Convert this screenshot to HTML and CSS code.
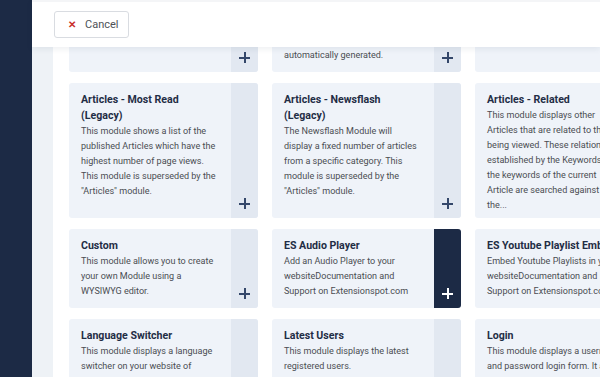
FILE: index.html
```html
<!DOCTYPE html>
<html lang="en">
<head>
    <meta charset="UTF-8">
    <meta name="viewport" content="width=device-width, initial-scale=1.0">
    <title>Modules: Select a Module Type</title>
    <link rel="stylesheet" href="styles.css">
</head>
<body>
    <div class="sidebar"></div>

    <div class="main">
        <!-- Pasek narzedzi -->
        <div class="toolbar">
            <button class="btn-cancel" type="button">
                <span class="btn-cancel-icon">&#x2715;</span>
                Cancel
            </button>
        </div>

        <div class="content">
            <div class="panel">
                <div class="modules">
                    <!-- Rzad 1 (przewiniety) -->
                    <div class="module">
                        <div class="module-body">
                            <h3 class="module-title">Articles - Categories</h3>
                            <p class="module-desc">This module displays a list of categories from one parent category.</p>
                        </div>
                        <div class="module-add"><span class="plus"></span></div>
                    </div>
                    <div class="module">
                        <div class="module-body">
                            <h3 class="module-title">Articles - Archived</h3>
                            <p class="module-desc">This module shows a list of the calendar months containing archived articles. After you have changed the status of an article to archived, this list will be automatically generated.</p>
                        </div>
                        <div class="module-add"><span class="plus"></span></div>
                    </div>
                    <div class="module">
                        <div class="module-body">
                            <h3 class="module-title">Articles - Latest</h3>
                            <p class="module-desc">This module shows a list of the most recently published and current Articles.</p>
                        </div>
                        <div class="module-add"><span class="plus"></span></div>
                    </div>

                    <!-- Rzad 2 -->
                    <div class="module">
                        <div class="module-body">
                            <h3 class="module-title">Articles - Most Read (Legacy)</h3>
                            <p class="module-desc">This module shows a list of the published Articles which have the highest number of page views. This module is superseded by the "Articles" module.</p>
                        </div>
                        <div class="module-add"><span class="plus"></span></div>
                    </div>
                    <div class="module">
                        <div class="module-body">
                            <h3 class="module-title">Articles - Newsflash (Legacy)</h3>
                            <p class="module-desc">The Newsflash Module will display a fixed number of articles from a specific category. This module is superseded by the "Articles" module.</p>
                        </div>
                        <div class="module-add"><span class="plus"></span></div>
                    </div>
                    <div class="module">
                        <div class="module-body">
                            <h3 class="module-title">Articles - Related</h3>
                            <p class="module-desc">This module displays other Articles that are related to the one being viewed. These relations are established by the Keywords. All the keywords of the current Article&nbsp;are searched against all the...</p>
                        </div>
                        <div class="module-add"><span class="plus"></span></div>
                    </div>

                    <!-- Rzad 3 -->
                    <div class="module">
                        <div class="module-body">
                            <h3 class="module-title">Custom</h3>
                            <p class="module-desc">This module allows you to create your own Module using a WYSIWYG editor.</p>
                        </div>
                        <div class="module-add"><span class="plus"></span></div>
                    </div>
                    <div class="module">
                        <div class="module-body">
                            <h3 class="module-title">ES Audio Player</h3>
                            <p class="module-desc">Add an Audio Player to your websiteDocumentation and Support on Extensionspot.com</p>
                        </div>
                        <div class="module-add active"><span class="plus"></span></div>
                    </div>
                    <div class="module">
                        <div class="module-body">
                            <h3 class="module-title nowrap">ES Youtube Playlist Embed</h3>
                            <p class="module-desc">Embed Youtube Playlists in your websiteDocumentation and Support on Extensionspot.com</p>
                        </div>
                        <div class="module-add"><span class="plus"></span></div>
                    </div>

                    <!-- Rzad 4 -->
                    <div class="module">
                        <div class="module-body">
                            <h3 class="module-title">Language Switcher</h3>
                            <p class="module-desc">This module displays a language switcher on your website of available content languages.</p>
                        </div>
                        <div class="module-add"><span class="plus"></span></div>
                    </div>
                    <div class="module">
                        <div class="module-body">
                            <h3 class="module-title">Latest Users</h3>
                            <p class="module-desc">This module displays the latest registered users.</p>
                        </div>
                        <div class="module-add"><span class="plus"></span></div>
                    </div>
                    <div class="module">
                        <div class="module-body">
                            <h3 class="module-title">Login</h3>
                            <p class="module-desc">This module displays a username and password login form. It also displays a link.</p>
                        </div>
                        <div class="module-add"><span class="plus"></span></div>
                    </div>
                </div>
            </div>
        </div>
    </div>
</body>
</html>
```

FILE: styles.css
```css
body {
    margin: 0;
    height: 100vh;
    display: flex;
    overflow: hidden;
    font-family: Roboto, "Liberation Sans", sans-serif;
    background-color: #eef2f6;
}
.sidebar {
    width: 32px;
    flex-shrink: 0;
    background-color: #1c2a45;
}
.main {
    flex: 1;
    min-width: 0;
    display: flex;
    flex-direction: column;
}
/* Pasek z przyciskiem Cancel - lezy nad przewinieta lista */
.toolbar {
    position: relative;
    z-index: 1;
    height: 47px;
    flex-shrink: 0;
    display: flex;
    align-items: center;
    padding-left: 22px;
    background-color: #fff;
    border-top: 2px solid #f4f5f7;
    box-sizing: border-box;
    box-shadow: 0 2px 6px rgba(30, 50, 80, 0.08);
}
.btn-cancel {
    height: 27px;
    width: 75px;
    display: flex;
    align-items: center;
    padding: 0 0 0 13px;
    gap: 9px;
    background-color: #fff;
    border: 1px solid #d9dce1;
    border-radius: 3px;
    color: #4e5257;
    font-family: inherit;
    font-size: 11px;
}
.btn-cancel-icon {
    color: #c9302c;
    font-size: 10px;
    font-weight: bold;
}
.content {
    flex: 1;
    padding-left: 21px;
    overflow: hidden;
}
.panel {
    display: flow-root;
    height: 100%;
    background-color: #fff;
    padding: 0 16px;
}
.modules {
    display: grid;
    grid-template-columns: repeat(3, 189px);
    grid-template-rows: 124px 135px 79px 135px;
    column-gap: 14px;
    row-gap: 11px;
    margin-top: -99px;
}
.module {
    display: flex;
    background-color: #eff3f9;
    border-radius: 3px;
    overflow: hidden;
}
.module-body {
    flex: 1;
    padding: 9px 12px;
}
.module-title {
    margin: 0;
    font-size: 10.6px;
    line-height: 16px;
    font-weight: 700;
    color: #1f2d45;
}
.nowrap {
    white-space: nowrap;
}
.module-desc {
    margin: 0;
    font-size: 9.05px;
    line-height: 15px;
    color: #4a4d52;
}
/* Kolumna z przyciskiem dodawania */
.module-add {
    width: 27px;
    flex-shrink: 0;
    display: flex;
    align-items: flex-end;
    justify-content: center;
    padding-bottom: 9px;
    box-sizing: border-box;
    background-color: #e2e8f1;
}
.module-add.active {
    background-color: #1c2a45;
}
.plus {
    position: relative;
    width: 11px;
    height: 11px;
}
.plus::before,
.plus::after {
    content: "";
    position: absolute;
    background-color: #34476a;
}
.plus::before {
    left: 0;
    top: 4.5px;
    width: 11px;
    height: 2px;
}
.plus::after {
    left: 4.5px;
    top: 0;
    width: 2px;
    height: 11px;
}
.module-add.active .plus::before,
.module-add.active .plus::after {
    background-color: #fff;
}
```
